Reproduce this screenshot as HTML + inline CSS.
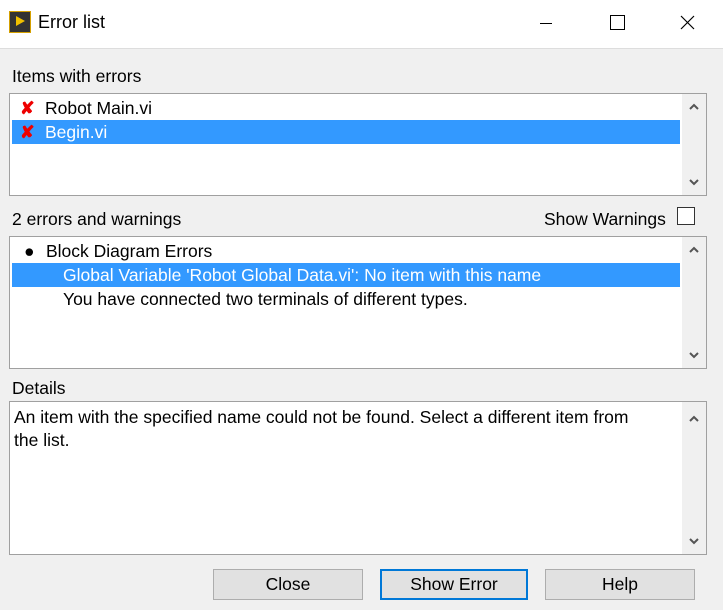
<!DOCTYPE html>
<html><head><style>
body{margin:0;width:723px;height:610px;background:#f0f0f0;font-family:"Liberation Sans",sans-serif;font-size:17.5px;color:#000;position:relative;overflow:hidden}
.a{position:absolute}
.title{left:0;top:0;width:723px;height:48px;background:#fff;border-bottom:1px solid #ddd}
.box{position:absolute;left:9px;width:696px;background:#fff;border:1px solid #a0a0a0}
.sb{position:absolute;right:0;top:0;bottom:0;width:24px;background:#f0f0f0}
.sb .u,.sb .d{position:absolute;left:6px;width:12px;height:10px}
.sel{position:absolute;left:2px;width:668px;height:24px;background:#3399ff;color:#fff}
.row{position:absolute;white-space:nowrap;line-height:24px}
.btn{position:absolute;top:569px;height:31px;background:#e1e1e1;border:1px solid #adadad;text-align:center;line-height:29px;box-sizing:border-box}
.x{color:#e00;font-weight:bold;position:absolute;left:10px}
</style></head><body>
<div class="a title">
 <div class="a" style="left:9px;top:11px;width:22px;height:22px;background:#333;border:1px solid #d4a000;box-sizing:border-box"><div class="a" style="left:6px;top:4px;width:0;height:0;border-left:9px solid #f0c000;border-top:5px solid transparent;border-bottom:5px solid transparent"></div></div>
 <div class="a" style="left:38px;top:12px;font-size:18px">Error list</div>
 <div class="a" style="left:540px;top:23px;width:12px;height:1px;background:#000"></div>
 <div class="a" style="left:610px;top:15px;width:13px;height:13px;border:1px solid #000"></div>
 <svg class="a" style="left:680px;top:15px" width="15" height="15"><path d="M1 1L14 14M14 1L1 14" stroke="#000" stroke-width="1.2"/></svg>
</div>
<div class="a" style="left:12px;top:66px">Items with errors</div>
<div class="box" style="top:93px;height:101px">
 <div class="row" style="top:2px;left:0;width:660px"><span class="x">✘</span><span style="position:absolute;left:35px">Robot Main.vi</span></div>
 <div class="sel" style="top:26px"><div class="row" style="left:0;top:0"><span class="x" style="left:8px">✘</span><span style="position:absolute;left:33px">Begin.vi</span></div></div>
 <div class="sb"><svg class="u" style="top:8px" viewBox="0 0 12 10"><path d="M2 7L6 3L10 7" fill="none" stroke="#555" stroke-width="2"/></svg><svg class="d" style="bottom:8px" viewBox="0 0 12 10"><path d="M2 3L6 7L10 3" fill="none" stroke="#555" stroke-width="2"/></svg></div>
</div>
<div class="a" style="left:12px;top:209px">2 errors and warnings</div>
<div class="a" style="left:544px;top:209px">Show Warnings</div>
<div class="a" style="left:677px;top:207px;width:18px;height:18px;border:1px solid #333;background:#fff;box-sizing:border-box"></div>
<div class="box" style="top:236px;height:131px">
 <div class="row" style="top:2px;left:14px">●</div>
 <div class="row" style="top:2px;left:36px">Block Diagram Errors</div>
 <div class="sel" style="top:26px"><div class="row" style="left:51px;top:0">Global Variable 'Robot Global Data.vi': No item with this name</div></div>
 <div class="row" style="top:50px;left:53px">You have connected two terminals of different types.</div>
 <div class="sb"><svg class="u" style="top:8px" viewBox="0 0 12 10"><path d="M2 7L6 3L10 7" fill="none" stroke="#555" stroke-width="2"/></svg><svg class="d" style="bottom:8px" viewBox="0 0 12 10"><path d="M2 3L6 7L10 3" fill="none" stroke="#555" stroke-width="2"/></svg></div>
</div>
<div class="a" style="left:12px;top:378px">Details</div>
<div class="box" style="top:401px;height:152px">
 <div class="a" style="left:4px;top:4px;width:635px;line-height:23px">An item with the specified name could not be found. Select a different item from the list.</div>
 <div class="sb"><svg class="u" style="top:12px" viewBox="0 0 12 10"><path d="M2 7L6 3L10 7" fill="none" stroke="#555" stroke-width="2"/></svg><svg class="d" style="bottom:8px" viewBox="0 0 12 10"><path d="M2 3L6 7L10 3" fill="none" stroke="#555" stroke-width="2"/></svg></div>
</div>
<div class="btn" style="left:213px;width:150px">Close</div>
<div class="btn" style="left:380px;width:148px;border:2px solid #0078d7;line-height:27px">Show Error</div>
<div class="btn" style="left:545px;width:150px">Help</div>
</body></html>
